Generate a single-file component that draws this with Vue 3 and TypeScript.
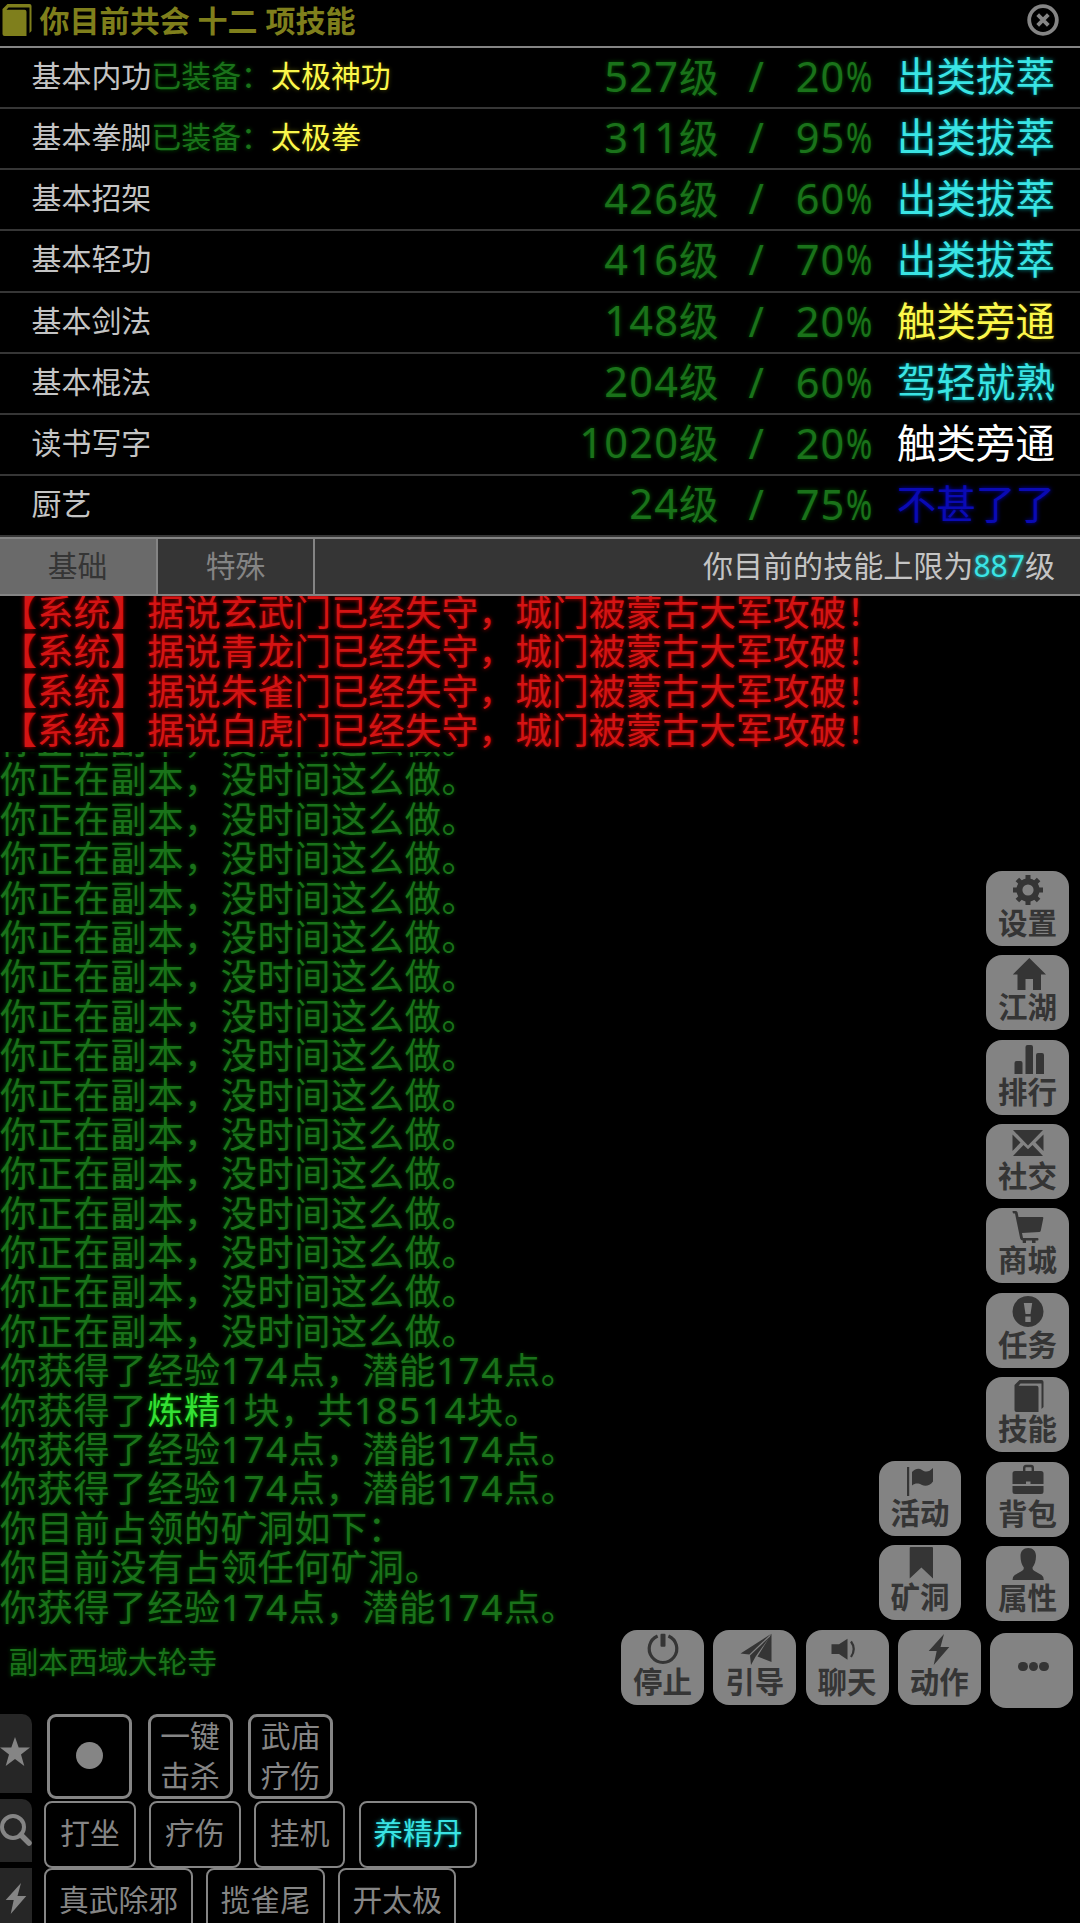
<script setup lang="ts">
interface Skill {
  name: string
  equip?: string
  level: string
  pct: string
  rank: string
  tone: string
}
interface MenuItem {
  icon: string
  label: string
}
interface Part {
  text: string
  kind: 'num' | 'lime' | 'plain'
}

const skills: Skill[] = [
  { name: '基本内功', equip: '太极神功', level: '527', pct: '20', rank: '出类拔萃', tone: 'cyan' },
  { name: '基本拳脚', equip: '太极拳', level: '311', pct: '95', rank: '出类拔萃', tone: 'cyan' },
  { name: '基本招架', level: '426', pct: '60', rank: '出类拔萃', tone: 'cyan' },
  { name: '基本轻功', level: '416', pct: '70', rank: '出类拔萃', tone: 'cyan' },
  { name: '基本剑法', level: '148', pct: '20', rank: '触类旁通', tone: 'yellow' },
  { name: '基本棍法', level: '204', pct: '60', rank: '驾轻就熟', tone: 'cyan' },
  { name: '读书写字', level: '1020', pct: '20', rank: '触类旁通', tone: 'white' },
  { name: '厨艺', level: '24', pct: '75', rank: '不甚了了', tone: 'blue' },
]

const gates: string[] = ['玄武门', '青龙门', '朱雀门', '白虎门']
const gain = '你获得了经验174点，潜能174点。'
const lines: string[] = [
  ...Array.from({ length: 16 }, () => '你正在副本，没时间这么做。'),
  gain,
  '你获得了炼精1块，共18514块。',
  gain,
  gain,
  '你目前占领的矿洞如下：',
  '你目前没有占领任何矿洞。',
  gain,
]

// Numbers and item names get their own styling inside a log line.
function parts(line: string): Part[] {
  return line
    .split(/(\d+|炼精)/)
    .filter((t) => t !== '')
    .map((text) => ({
      text,
      kind: /^\d/.test(text) ? 'num' : text === '炼精' ? 'lime' : 'plain',
    }))
}
const log: Part[][] = lines.map(parts)

const column: MenuItem[] = [
  { icon: 'gear', label: '设置' },
  { icon: 'home', label: '江湖' },
  { icon: 'bars', label: '排行' },
  { icon: 'mail', label: '社交' },
  { icon: 'cart', label: '商城' },
  { icon: 'alert', label: '任务' },
  { icon: 'book', label: '技能' },
  { icon: 'case', label: '背包' },
  { icon: 'user', label: '属性' },
]
const side: MenuItem[] = [
  { icon: 'flag', label: '活动' },
  { icon: 'mark', label: '矿洞' },
]
const row: MenuItem[] = [
  { icon: 'power', label: '停止' },
  { icon: 'plane', label: '引导' },
  { icon: 'sound', label: '聊天' },
  { icon: 'bolt', label: '动作' },
]

const icons: Record<string, string> = {
  gear:
    '<circle cx="16" cy="16" r="8.6" fill="none" stroke="currentColor" stroke-width="6"/>' +
    '<path d="M16 1v5M16 26v5M1 16h5M26 16h5M5.4 5.4l3.6 3.6M23 23l3.6 3.6M26.6 5.4l-3.6 3.6M9 23l-3.6 3.6" stroke="currentColor" stroke-width="5"/>',
  home: '<path d="M17.3 0 34 16.5H29V32h-8V21h-7.500V32H5.500V16.500H.8z"/>',
  bars: '<path d="M2.500 31V20q0-2 2-2h4q2 0 2 2v11zM13.500 31V4q0-2 2-2H19q2 0 2 2v27zM24 31V12q0-2 2-2h4q2 0 2 2v19z"/>',
  mail: '<path d="M1 3H31L16 18.500zM.500 7.500 8.500 15.500.500 24zM31.500 7.500 23.500 15.500 31.500 24zM1 29 11.500 18l4.500 4.300 4.500-4.300L31 29z"/>',
  cart:
    '<path d="M.500 0H4q1.200 0 1.600 1.500L6.500 6H30.500q1 0 .8 1.200L28.800 19.500q-.3 1.500-1.500 1.600L10 22l1 5H25.500q1 0 1 1.200t-1 1.200H23.500V32H20V29.500H14V32H10.700V29.500q-2 0-2.500-2L3 2.500H1.500Q.500 2 .500 0z"/>',
  alert:
    '<path fill-rule="evenodd" d="M16 0a15.500 15.500 0 1 0 .01 0zM11.800 7H20.200L18.500 18H13.500zM13.300 20.500h5.400v5.500h-5.400z"/>',
  book:
    '<path d="M2.500 5 7.500 0H29.500q2 0 2 2V27l-2 2V3.500H8.500L6.500 5.800H24.500q2 0 2 2V32H4.500q-2 0-2-2z"/>',
  case:
    '<path d="M12.200 7V3Q12.200 1 14 1h5q1.800 0 1.800 2V7" fill="none" stroke="currentColor" stroke-width="2.400"/>' +
    '<path d="M3 6H29q2.500 0 2.500 2.500V19H18.500V16.500H14V19H.500V8.500Q.500 6 3 6zM.500 21H31.500v5.500q0 2.500-2.500 2.500H3q-2.500 0-2.500-2.500z"/>',
  user:
    '<path d="M16.200-1C21-1 24 2 24 7c0 5-1.500 9-3.500 11.500 0 2 .5 2.500 2 3.500l7 4q2.300 1.500 2.300 5H.500q0-3.500 2.300-5l7-4c1.500-1 2-1.500 2-3.500C9.800 16 8.500 12 8.500 7c0-5 3-8 7.700-8z"/>',
  flag: '<path d="M3 3h2.200v29H3zM8 8C12 4 15 4 18 6c4 2.500 7 2 11-2V17.500C26 22 21 22.500 18 21c-4-2-6.500-2-10 .5z"/>',
  mark: '<path d="M5.700 0Q5.700-1 6.700-1H28q1 0 1 1V30.500L17.400 19.500 5.700 30.500z"/>',
  power:
    '<path d="M10.600 3a13.800 13.800 0 1 0 10.800 0" fill="none" stroke="currentColor" stroke-width="3.200"/><rect x="13.500" y=".7" width="5" height="13" rx="1"/>',
  plane:
    '<path d="M32.300.7 1.500 20.500l8.800 1zM31 3.500 11 22.500l1 9.500 4.500-8.300zM32.500.7V29L18.500 23.500z"/>',
  sound:
    '<path d="M.500 11.300H8L16.500 5.700v21L8 21H.500z"/><path d="M20 8.500q5.500 7.500 0 15.500" fill="none" stroke="currentColor" stroke-width="2.200"/>',
  bolt: '<path d="M21 1 5.700 18h8L10.700 32 26.300 14H17.500z"/>',
}
</script>

<template>
  <div class="screen">
    <header class="head">
      <svg class="head-book" viewBox="0 0 32 32" v-html="icons.book"></svg>
      <h1>你目前共会 十二 项技能</h1>
      <svg class="close" viewBox="0 0 32 32">
        <circle cx="16" cy="16" r="13" />
        <path d="M11 11l10 10M21 11L11 21" />
      </svg>
    </header>

    <ul class="skills">
      <li v-for="s in skills" :key="s.name">
        <div class="name">
          {{ s.name }}<template v-if="s.equip"><span class="green">已装备：</span><span class="yellow">{{ s.equip }}</span></template>
        </div>
        <div class="level green"><b>{{ s.level }}</b>级</div>
        <div class="slash green">/</div>
        <div class="pct green"><b>{{ s.pct }}</b><i>%</i></div>
        <div class="rank" :class="s.tone">{{ s.rank }}</div>
      </li>
    </ul>

    <nav class="tabs">
      <div class="tab on">基础</div>
      <div class="tab">特殊</div>
      <div class="cap">你目前的技能上限为<span class="cyan">887</span>级</div>
    </nav>

    <section class="notice">
      <p v-for="g in gates" :key="g">【系统】据说{{ g }}已经失守，城门被蒙古大军攻破！</p>
    </section>

    <section class="log">
      <p v-for="(line, i) in log" :key="i"><span v-for="(p, j) in line" :key="j" :class="p.kind">{{ p.text }}</span></p>
    </section>

    <div class="place">副本西域大轮寺</div>

    <footer class="dock">
      <div class="rail">
        <div class="r1"><svg viewBox="0 0 32 30"><path d="M15 0l3.700 10.500H30L21 17.500 24.300 29 15 22 5.700 29 9 17.500 0 10.500h11.300z" /></svg></div>
        <div class="r2">
          <svg viewBox="0 0 32 32"><circle cx="13" cy="13" r="11" fill="none" stroke="currentColor" stroke-width="4" /><path d="M21 21l8 8" stroke="currentColor" stroke-width="5.500" stroke-linecap="round" /></svg>
        </div>
        <div class="r3"><svg viewBox="0 0 32 32" v-html="icons.bolt"></svg></div>
      </div>
      <div class="actions">
        <div class="keys">
          <div class="key"><span class="dot"></span></div>
          <div class="key">一键<br />击杀</div>
          <div class="key">武庙<br />疗伤</div>
        </div>
        <div class="cmds first">
          <div>打坐</div>
          <div>疗伤</div>
          <div>挂机</div>
          <div class="cyan">养精丹</div>
        </div>
        <div class="cmds">
          <div>真武除邪</div>
          <div>揽雀尾</div>
          <div>开太极</div>
        </div>
      </div>
    </footer>

    <div class="menu-col">
      <button v-for="m in column" :key="m.label" class="btn">
        <svg viewBox="0 0 32 32" v-html="icons[m.icon]"></svg><span>{{ m.label }}</span>
      </button>
    </div>
    <div class="menu-col side">
      <button v-for="m in side" :key="m.label" class="btn">
        <svg viewBox="0 0 32 32" v-html="icons[m.icon]"></svg><span>{{ m.label }}</span>
      </button>
    </div>
    <div class="menu-row">
      <button v-for="m in row" :key="m.label" class="btn">
        <svg viewBox="0 0 32 32" v-html="icons[m.icon]"></svg><span>{{ m.label }}</span>
      </button>
      <button class="btn more"><i></i><i></i><i></i></button>
    </div>
  </div>
</template>

<style>
body {
  background: #000;
  overflow: hidden;
}
</style>

<style scoped>
.screen {
  position: relative;
  display: flex;
  flex-direction: column;
  width: 1080px;
  height: 1923px;
  overflow: hidden;
  background: #000;
  color: #c4c4c4;
  font-family: 'Noto Sans', 'Noto Sans CJK SC', sans-serif;
  font-size: 29.800px;
  white-space: nowrap;
}
ul,
p,
h1 {
  margin: 0;
  padding: 0;
}
svg {
  overflow: visible;
  fill: currentColor;
}
.green {
  color: #1a721a;
  text-shadow: 0 0 4px rgba(0, 128, 0, 0.6);
}
.yellow {
  color: #fbf74c;
  text-shadow: 0 0 4px rgba(255, 255, 0, 0.3);
}
.cyan {
  color: #3ae4e4;
  text-shadow: 0 0 4px rgba(0, 255, 255, 0.6);
}
.white {
  color: #fff;
}
.blue {
  color: #0a0ab4;
  text-shadow: 0 0 4px rgba(0, 0, 255, 0.7);
}
.lime {
  color: #35e035;
  text-shadow: 0 0 4px rgba(0, 255, 0, 0.6);
}

.head {
  box-sizing: border-box;
  flex: none;
  display: flex;
  align-items: center;
  height: 48px;
  padding: 0 20px 6px 0;
  border-bottom: 2px solid #848484;
  color: #7f7f1c;
}
.head-book {
  width: 32px;
  height: 32px;
}
.head h1 {
  flex: 1;
  margin-left: 7.500px;
  font-size: 30.050px;
  line-height: 40px;
  padding-top: 2px;
}
.close {
  width: 34px;
  height: 34px;
  color: #858585;
  fill: none;
  stroke: currentColor;
  stroke-width: 3.600;
}

.skills {
  flex: none;
  list-style: none;
}
.skills li {
  box-sizing: border-box;
  display: flex;
  align-items: center;
  height: 61.125px;
  padding: 0 25px 3px 31.500px;
  border-bottom: 2px solid #363636;
  line-height: 56px;
}
.name {
  flex: 1;
  font-size: 29.950px;
}
.level {
  font-size: 39.600px;
}
.level b,
.pct b {
  font-weight: 400;
  font-size: 41.500px;
  letter-spacing: 1.200px;
}
.slash {
  width: 77px;
  text-align: center;
  text-indent: -2px;
  font-size: 41.500px;
}
.pct {
  display: flex;
  width: 101px;
  font-size: 41.500px;
}
.pct i {
  width: 25px;
  font-style: normal;
  transform: scaleX(0.76);
  transform-origin: 0 50%;
}
.rank {
  font-size: 39.600px;
}

.tabs {
  box-sizing: border-box;
  flex: none;
  display: flex;
  height: 59px;
  border-top: 2px solid #848484;
  border-bottom: 2px solid #848484;
  background: #353535;
  line-height: 54px;
}
.tab {
  width: 155px;
  border-right: 2px solid #848484;
  color: #848484;
  text-align: center;
}
.tab.on {
  width: 156px;
  background: #6a6a6a;
  color: #353535;
  text-indent: -1px;
}
.cap {
  flex: 1;
  padding-right: 25px;
  font-size: 30.050px;
  text-align: right;
}

.notice {
  flex: none;
  height: 156px;
  overflow: hidden;
  color: #d41414;
  text-shadow: 0 0 4px rgba(255, 0, 0, 0.75);
  font-size: 36.800px;
}
.notice p {
  height: 39.400px;
  line-height: 39.400px;
  position: relative;
  top: -3px;
}
.log {
  flex: none;
  box-sizing: border-box;
  display: flex;
  flex-direction: column;
  justify-content: flex-end;
  height: 875px;
  overflow: hidden;
  color: #1a721a;
  text-shadow: 0 0 4px rgba(0, 128, 0, 0.6);
  font-size: 36.200px;
  letter-spacing: 0.600px;
}
.log p {
  flex: none;
  height: 39.400px;
  line-height: 39.400px;
}
.log .num {
  font-size: 37px;
  line-height: 1;
  letter-spacing: 1.500px;
}
.place {
  flex: none;
  box-sizing: border-box;
  height: 87px;
  padding: 15px 0 0 8.500px;
  line-height: 40px;
  color: #1a721a;
  text-shadow: 0 0 4px rgba(0, 128, 0, 0.6);
}

.dock {
  flex: 1;
  display: flex;
  color: #858585;
}
.rail {
  width: 32px;
}
.rail div {
  box-sizing: border-box;
  background: #262626;
  border-top-right-radius: 10px;
}
.rail svg {
  display: block;
  width: 32px;
}
.r1 {
  height: 79px;
  margin-bottom: 6px;
  padding-top: 23px;
}
.r2 {
  height: 63px;
  margin-bottom: 6px;
  padding-top: 15px;
}
.rail .r3 {
  height: 60px;
  padding-top: 14px;
  border-radius: 0;
}
.actions {
  flex: 1;
}
.keys {
  display: flex;
  gap: 15.500px;
  padding-left: 15px;
}
.key {
  box-sizing: border-box;
  display: flex;
  align-items: center;
  justify-content: center;
  width: 85px;
  height: 85px;
  padding-bottom: 2px;
  border: 3px solid #858585;
  border-radius: 9px;
  line-height: 39.500px;
}
.dot {
  width: 27px;
  height: 27px;
  margin-top: -1px;
  border-radius: 50%;
  background: #858585;
}
.cmds {
  display: flex;
  gap: 13.300px;
  padding-left: 12.300px;
}
.cmds.first {
  padding-top: 2px;
}
.cmds div {
  box-sizing: border-box;
  min-width: 91.500px;
  height: 67px;
  padding: 0 12.600px;
  border: 2px solid #858585;
  border-radius: 8px;
  line-height: 60px;
  text-align: center;
}

.menu-col {
  position: absolute;
  left: 986px;
  top: 871px;
  display: flex;
  flex-direction: column;
  gap: 9.370px;
}
.menu-col.side {
  left: 879px;
  top: 1461px;
}
.side .btn {
  width: 82px;
}
.menu-row {
  position: absolute;
  left: 621px;
  top: 1630px;
  display: flex;
  gap: 9.250px;
}
.btn {
  box-sizing: border-box;
  display: flex;
  flex-direction: column;
  align-items: center;
  width: 83px;
  height: 75px;
  padding: 3px 0 0;
  border: 0;
  border-radius: 16px;
  background: #838383;
  color: #353535;
  font: 700 29.500px/34px 'Noto Sans', 'Noto Sans CJK SC', sans-serif;
}
.btn svg {
  flex: none;
  width: 32px;
  height: 32px;
}
.btn.more {
  flex-direction: row;
  justify-content: center;
  gap: 1.200px;
  margin-top: 3px;
  padding: 0 0 8px 4px;
}
.more i {
  width: 9.300px;
  height: 9.300px;
  border-radius: 50%;
  background: #353535;
}
</style>
